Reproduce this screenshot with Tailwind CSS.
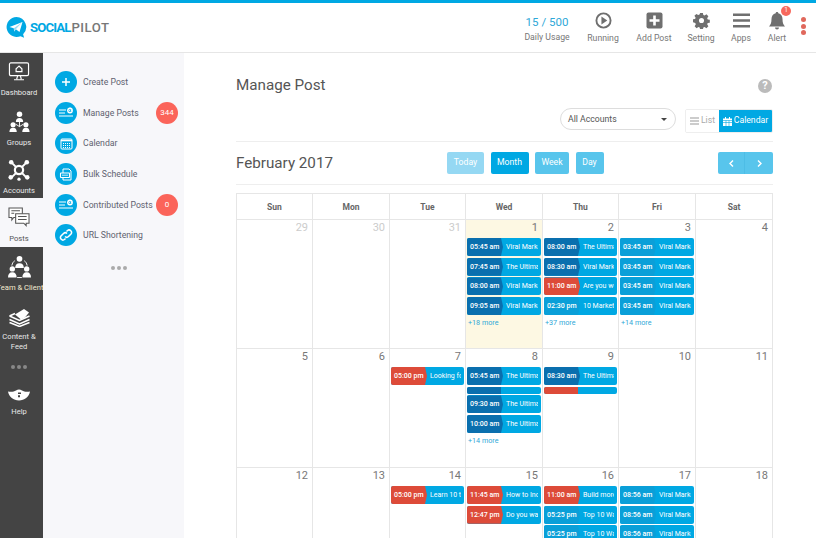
<!DOCTYPE html>
<html lang="en">
<head>
  <meta charset="UTF-8">
  <title>SocialPilot - Manage Post</title>
  <script src="https://cdn.jsdelivr.net/npm/@tailwindcss/browser@4"></script>
</head>
<body class="h-[538px] w-[816px] overflow-hidden bg-white font-['Roboto',sans-serif] text-[#777]">

  <!-- top bar -->
  <header class="flex h-[53px] items-center border-t-[3px] border-b border-t-[#00a8e3] border-b-[#e6e6e6] bg-white">
    <div class="flex w-[519px] items-center pl-[6px]">
      <svg class="h-[21px] w-[21px]" viewBox="0 0 21 21"><path fill="#00a8e3" d="M10.5 0a10 10 0 1 0 4 19.2l3.6 1.5-1-3.5A10 10 0 0 0 10.5 0z"/><path fill="#fff" d="M3.5 10 16.5 5l-3 10-3.7-2.7-1.6 2.2-.4-3.3z"/><path fill="#9fdcf3" d="m7.8 11.200 8.700-6.200-6.700 7.300-1.600 2.200z"/></svg>
      <span class="ml-[3px] text-[13.200px] font-bold tracking-[-0.9px] text-[#00a8e3]">SOCIAL</span><span class="ml-[1px] text-[13.200px] font-medium tracking-[0.5px] text-[#777]">PILOT</span>
    </div>
    <div class="flex w-[56px] flex-col items-center">
      <span class="mt-[1px] h-[18px] text-[11.500px] leading-[19px] whitespace-nowrap text-[#2fa8d8]">15 / 500</span>
      <span class="text-[8.700px] leading-[12px] whitespace-nowrap">Daily Usage</span>
    </div>
    <div class="flex w-[56px] flex-col items-center">
      <svg class="h-[17px] w-[17px]" viewBox="0 0 18 18"><circle cx="9" cy="9" r="7.500" fill="none" stroke="#6f6f6f" stroke-width="2"/><path fill="#6f6f6f" d="M6.800 4.800 13 9l-6.200 4.200z"/></svg>
      <span class="mt-[3px] text-[8.700px] leading-[12px]">Running</span>
    </div>
    <div class="flex w-[46px] flex-col items-center">
      <svg class="h-[17px] w-[17px]" viewBox="0 0 17 17"><rect x=".5" y=".5" width="16" height="16" rx="2" fill="#6f6f6f"/><path stroke="#fff" stroke-width="2.600" d="M8.500 3.500v10M3.500 8.500h10"/></svg>
      <span class="mt-[3px] text-[8.700px] leading-[12px] whitespace-nowrap">Add Post</span>
    </div>
    <div class="flex w-[48px] flex-col items-center">
      <svg class="h-[17px] w-[17px]" viewBox="0 0 18 18"><path fill="#6f6f6f" fill-rule="evenodd" d="M7.500 1h3l.4 2.200 1.400.6 1.900-1.300 2.100 2.100-1.300 1.900.6 1.400 2.200.4v3l-2.200.4-.6 1.400 1.300 1.900-2.100 2.100-1.900-1.300-1.400.6-.4 2.200h-3l-.4-2.200-1.400-.6-1.900 1.300-2.100-2.100 1.300-1.900-.6-1.400L0 10.800v-3l2.200-.4.6-1.400-1.300-1.900 2.100-2.100 1.900 1.300 1.400-.6zM9 6.300a2.700 2.700 0 1 0 0 5.400 2.700 2.700 0 0 0 0-5.400z"/></svg>
      <span class="mt-[3px] text-[8.700px] leading-[12px]">Setting</span>
    </div>
    <div class="flex w-[32px] flex-col items-center">
      <svg class="h-[17px] w-[17px]" viewBox="0 0 18 18"><path stroke="#6f6f6f" stroke-width="2.600" d="M0 3h18M0 9h18M0 15h18"/></svg>
      <span class="mt-[3px] text-[8.700px] leading-[12px]">Apps</span>
    </div>
    <div class="relative flex w-[40px] flex-col items-center">
      <svg class="h-[18px] w-[18px]" viewBox="0 0 18 18"><path fill="#6f6f6f" d="M9 0c.8 0 1.300.5 1.300 1.200C13 1.800 14.500 4 14.500 7c0 3.800.8 5.700 2.500 7.500H1C2.700 12.700 3.500 10.800 3.500 7c0-3 1.500-5.200 4.200-5.800C7.700.5 8.200 0 9 0zM7 15.500h4a2 2 0 0 1-4 0z"/></svg>
      <span class="mt-[2px] text-[8.700px] leading-[12px]">Alert</span>
      <span class="absolute top-[-6px] left-[24px] flex h-[10px] w-[10px] items-center justify-center rounded-full bg-[#f7685c] text-[6.500px] text-white">1</span>
    </div>
    <div class="mb-[3px] ml-[4px] flex flex-col gap-[1.700px]">
      <span class="h-[5px] w-[5px] rounded-full bg-[#e0685c]"></span>
      <span class="h-[5px] w-[5px] rounded-full bg-[#e0685c]"></span>
      <span class="h-[5px] w-[5px] rounded-full bg-[#e0685c]"></span>
    </div>
  </header>

  <div class="flex h-[485px]">
    <!-- dark rail -->
    <nav class="w-[43px] shrink-0 bg-[#444] text-center text-[7.600px] leading-[10px] text-[#e8e8e8]">
      <div class="flex h-[48px] flex-col items-center overflow-hidden pt-[9px] pr-[5px] whitespace-nowrap">
        <svg class="h-[20px] w-[22px]" viewBox="0 0 24 22" fill="none" stroke="#fff"><rect x="1.500" y="1" width="21" height="14" rx="1.500" stroke-width="1.300"/><path stroke-width="1.300" d="M12 4.500 8.800 7.500v3h6.400v-3zM9.500 18.800l1-3.800M14.500 18.800l-1-3.800M6.500 19.500h11"/></svg>
        <span class="mt-[6px]">Dashboard</span>
      </div>
      <div class="flex h-[49px] flex-col items-center pt-[10px] pr-[5px]">
        <svg class="h-[22px] w-[21px]" viewBox="0 0 22 24" fill="#fff"><circle cx="11" cy="3.500" r="3"/><path d="M7 12c0-3 1.500-4.500 4-4.500s4 1.500 4 4.500z"/><circle cx="4" cy="15" r="2.800"/><path d="M0 23c0-3 1.500-4.700 4-4.700S8 20 8 23z"/><circle cx="18" cy="15" r="2.800"/><path d="M14 23c0-3 1.500-4.700 4-4.700s4 1.700 4 4.700z"/><path fill="none" stroke="#fff" d="M11 12v5M11 17l-4-2.500M11 17l4-2.500"/></svg>
        <span class="mt-[5px]">Groups</span>
      </div>
      <div class="flex h-[48px] flex-col items-center pt-[9px] pr-[5px]">
        <svg class="h-[22px] w-[22px]" viewBox="0 0 24 24" fill="#fff"><circle cx="12" cy="12" r="4.500" fill="none" stroke="#fff" stroke-width="2.400"/><circle cx="3.500" cy="3.500" r="2.500"/><circle cx="20.500" cy="3.500" r="2.500"/><circle cx="3" cy="20" r="2.500"/><circle cx="21" cy="20" r="2.500"/><circle cx="12" cy="22" r="1.800"/><path stroke="#fff" stroke-width="2" d="m4 4 5 5M20 4l-5 5M4 20l5-5M20 20l-5-5"/></svg>
        <span class="mt-[5px]">Accounts</span>
      </div>
      <div class="flex h-[49px] flex-col items-center bg-[#f7f7fa] pt-[9px] pr-[5px] text-[#555]">
        <svg class="h-[21px] w-[22px]" viewBox="0 0 23 22" fill="#fff" stroke="#555" stroke-width="1.100"><path d="M1 1h14v10H6l-2 2.500V11H1z"/><path d="M8 7h14v10h-3v2.500L16.500 17H8z"/><path fill="none" d="M3.500 4h9M3.500 6.500h3M10.500 10h9M10.500 13h9"/></svg>
        <span class="mt-[6px]">Posts</span>
      </div>
      <div class="flex h-[49px] flex-col items-center overflow-hidden pt-[8px] pr-[3px] whitespace-nowrap">
        <svg class="mr-[2px] h-[24px] w-[23px]" viewBox="0 0 24 24" fill="#fff"><circle cx="12" cy="3.500" r="3"/><path d="M7.500 13c0-3.500 1.500-5 4.500-5s4.500 1.500 4.500 5z"/><circle cx="4.500" cy="14" r="2.800"/><path d="M0 23c0-3.500 1.500-5.500 4.500-5.500S9 19.500 9 23z"/><circle cx="19.500" cy="14" r="2.800"/><path d="M15 23c0-3.500 1.500-5.500 4.500-5.500S24 19.500 24 23z"/><path fill="none" stroke="#fff" d="M4 10.500C4.500 8 5.500 6.500 7 5.500M20 10.500c-.5-2.500-1.500-4-3-5M9.500 23h5"/></svg>
        <span class="mt-[4px] text-[#f3ead0]">Team &amp; Client</span>
      </div>
      <div class="flex h-[59px] flex-col items-center pt-[12px] pr-[5px]">
        <svg class="h-[19px] w-[23px]" viewBox="0 0 23 19" fill="none" stroke="#fff" stroke-width="1.500"><path fill="#fff" stroke="none" d="M7 6.500 16 1l5 3.500-4 5-4 2z"/><path d="m1.500 8 10 4.500 10-4.500M1.500 11.500l10 4.500 10-4.500M1.500 14.500l10 4 10-4M1.500 8 7 5.500"/></svg>
        <span class="mt-[5px]">Content &amp; Feed</span>
      </div>
      <div class="flex h-[33px] justify-center gap-[2px] pt-[10px] pr-[5px]">
        <span class="h-[4px] w-[4px] rounded-full bg-[#888]"></span>
        <span class="h-[4px] w-[4px] rounded-full bg-[#888]"></span>
        <span class="h-[4px] w-[4px] rounded-full bg-[#888]"></span>
      </div>
      <div class="flex flex-col items-center pt-[1px] pr-[5px]">
        <svg class="h-[12px] w-[22px]" viewBox="0 0 22 12"><path fill="#fff" d="M0 2.500C3 3 6 2.800 8 1.500c1-.6 2-1 3-1s2 .4 3 1c2 1.300 5 1.500 8 1-1 5.500-5.500 9-11 9S1 8 0 2.500z"/><path fill="#444" d="M10 3.500h3v1.500h-3zM10 6.200h2v2h-2z"/></svg>
        <span class="mt-[6px]">Help</span>
      </div>
    </nav>

    <!-- section menu -->
    <aside class="w-[141px] shrink-0 bg-[#f7f7fa] pt-[18px] text-[8.700px] leading-[13px] text-[#5f6270]">
      <div class="flex h-[30.700px] items-start pl-[12px]">
        <span class="flex h-[22px] w-[22px] shrink-0 items-center justify-center rounded-full bg-[#00a8e3]">
          <svg class="h-[10px] w-[10px]" viewBox="0 0 10 10"><path stroke="#fff" stroke-width="1.500" d="M5 1v8M1 5h8"/></svg>
        </span>
        <span class="mt-[5px] ml-[6px]">Create Post</span>
      </div>
      <div class="flex h-[30.700px] items-start pr-[6px] pl-[12px]">
        <span class="flex h-[22px] w-[22px] shrink-0 items-center justify-center rounded-full bg-[#00a8e3]">
          <svg class="h-[14px] w-[16px]" viewBox="0 0 16 14" fill="none" stroke="#fff"><path stroke-width="1.200" d="M1 4h7M1 7h6M1 10h14"/><circle cx="12" cy="4.500" r="2.200" stroke-width="1.400"/><path stroke-width=".8" stroke-dasharray="1 1" d="M9 4.500h6M12 1.500v6"/></svg>
        </span>
        <span class="mt-[5px] ml-[6px]">Manage Posts</span>
        <span class="ml-auto flex h-[22px] w-[22px] shrink-0 items-center justify-center rounded-full bg-[#fb645a] text-[8px] text-white">344</span>
      </div>
      <div class="flex h-[30.700px] items-start pl-[12px]">
        <span class="flex h-[22px] w-[22px] shrink-0 items-center justify-center rounded-full bg-[#00a8e3]">
          <svg class="h-[13px] w-[13px]" viewBox="0 0 13 13" fill="none" stroke="#fff"><rect x="1" y="2" width="11" height="10" rx="1"/><path stroke-width="1.600" d="M1 3.500h11"/><path stroke-dasharray="1 1" d="M3 6.500h7M3 8.500h7M3 10.500h7"/></svg>
        </span>
        <span class="mt-[5px] ml-[6px]">Calendar</span>
      </div>
      <div class="flex h-[30.700px] items-start pl-[12px]">
        <span class="flex h-[22px] w-[22px] shrink-0 items-center justify-center rounded-full bg-[#00a8e3]">
          <svg class="h-[13px] w-[14px]" viewBox="0 0 14 13" fill="none" stroke="#fff"><path d="M4 1h6l2 2v9H4z"/><rect x="1.500" y="5" width="9" height="4.500" rx=".5" fill="#00a8e3" stroke-width="1.100"/><path stroke-width=".8" d="M3 7.200h6"/></svg>
        </span>
        <span class="mt-[5px] ml-[6px]">Bulk Schedule</span>
      </div>
      <div class="flex h-[30.700px] items-start pr-[6px] pl-[12px]">
        <span class="flex h-[22px] w-[22px] shrink-0 items-center justify-center rounded-full bg-[#00a8e3]">
          <svg class="h-[14px] w-[16px]" viewBox="0 0 16 14" fill="none" stroke="#fff"><path stroke-width="1.200" d="M1 4h7M1 7h6M1 10h14"/><circle cx="12" cy="4.500" r="2.200" stroke-width="1.400"/><path stroke-width=".8" stroke-dasharray="1 1" d="M9 4.500h6M12 1.500v6"/></svg>
        </span>
        <span class="mt-[5px] ml-[6px] whitespace-nowrap">Contributed Posts</span>
        <span class="ml-auto flex h-[22px] w-[22px] shrink-0 items-center justify-center rounded-full bg-[#fb645a] text-[8px] text-white">0</span>
      </div>
      <div class="flex h-[30.700px] items-start pl-[12px]">
        <span class="flex h-[22px] w-[22px] shrink-0 items-center justify-center rounded-full bg-[#00a8e3]">
          <svg class="h-[14px] w-[14px]" viewBox="0 0 14 14" fill="none" stroke="#fff" stroke-width="1.500"><path d="M6 8.500a2.500 2.500 0 0 0 3.500 0l2.500-2.500A2.500 2.500 0 0 0 8.500 2.500L7.500 3.500"/><path d="M8 5.500a2.500 2.500 0 0 0-3.500 0L2 8a2.500 2.500 0 0 0 3.500 3.500l1-1"/></svg>
        </span>
        <span class="mt-[5px] ml-[6px]">URL Shortening</span>
      </div>
      <div class="mt-[11px] flex justify-center gap-[2px] pl-[10px]">
        <span class="h-[4px] w-[4px] rounded-full bg-[#aaa]"></span>
        <span class="h-[4px] w-[4px] rounded-full bg-[#aaa]"></span>
        <span class="h-[4px] w-[4px] rounded-full bg-[#aaa]"></span>
      </div>
    </aside>

    <!-- main -->
    <main class="w-[632px] shrink-0 pr-[43px] pl-[52px]">
      <div class="flex h-[55px] items-end justify-between pb-[13px]">
        <h1 class="text-[15.200px] leading-[20px] text-[#555]">Manage Post</h1>
        <span class="mr-[1px] mb-[2px] flex h-[14px] w-[14px] items-center justify-center rounded-full bg-[#bbb] text-[11px] font-bold text-white">?</span>
      </div>
      <div class="flex h-[34px] items-start justify-end border-b border-[#eee]">
        <div class="flex h-[22px] w-[116px] items-center justify-between rounded-full border border-[#ddd] pt-[1px] pr-[8px] pl-[7px] text-[8.700px] text-[#555]">
          All Accounts
          <span class="h-0 w-0 border-x-[3px] border-t-[3px] border-x-transparent border-t-[#444]"></span>
        </div>
        <div class="mt-[1px] ml-[9px] flex h-[24px] overflow-hidden rounded-[2px] border border-[#eee] text-[8.700px]">
          <span class="flex w-[33px] items-center justify-center gap-[2px] bg-white text-[#aaa]">
            <svg class="h-[8px] w-[9px]" viewBox="0 0 9 8"><path stroke="#999" stroke-width="1.200" d="M0 1h9M0 4h9M0 7h9"/></svg>List
          </span>
          <span class="flex w-[53px] items-center justify-center gap-[2px] bg-[#00a8e3] text-white">
            <svg class="h-[9px] w-[9px]" viewBox="0 0 9 9"><path fill="#fff" d="M0 1.500h9V9H0zM2 0h1v2H2zM6 0h1v2H6z"/><path stroke="#00a8e3" stroke-width=".6" d="M0 3.500h9M0 5.500h9M3 3.500V9M6 3.500V9"/></svg>Calendar
          </span>
        </div>
      </div>
      <div class="flex h-[43px] items-center border-b border-[#eee]">
        <h2 class="w-[211px] text-[15.200px] text-[#555]">February 2017</h2>
        <div class="flex gap-[6.500px] text-[8.700px] text-white">
          <span class="flex h-[22px] w-[37px] items-center justify-center rounded-[2px] bg-[#95d8f3]">Today</span>
          <span class="flex h-[22px] w-[38px] items-center justify-center rounded-[2px] bg-[#00a8e3]">Month</span>
          <span class="flex h-[22px] w-[34px] items-center justify-center rounded-[2px] bg-[#58c5ec]">Week</span>
          <span class="flex h-[22px] w-[28px] items-center justify-center rounded-[2px] bg-[#58c5ec]">Day</span>
        </div>
        <div class="ml-auto flex h-[22px] w-[55px] overflow-hidden rounded-[2px] bg-[#58c5ec]">
          <span class="flex w-[27px] items-center justify-center border-r border-[#4dbde6]">
            <svg class="h-[7px] w-[5px]" viewBox="0 0 5 7" fill="none"><path stroke="#fff" stroke-width="1.400" d="M4 .5 1 3.500l3 3"/></svg>
          </span>
          <span class="flex w-[28px] items-center justify-center">
            <svg class="h-[7px] w-[5px]" viewBox="0 0 5 7" fill="none"><path stroke="#fff" stroke-width="1.400" d="m1 .5 3 3-3 3"/></svg>
          </span>
        </div>
      </div>

      <!-- calendar -->
      <div class="mt-[8px] grid h-[400px] grid-cols-[76px_77px_76px_77px_76px_77px_77px] grid-rows-[26px_129px_119px_126px] border-t border-l border-[#e6e6e6] text-[11px] leading-[16px] text-[#777]">
        <div class="flex items-center justify-center border-r border-b border-[#e6e6e6] text-[8.500px] font-bold text-[#666]">Sun</div>
        <div class="flex items-center justify-center border-r border-b border-[#e6e6e6] text-[8.500px] font-bold text-[#666]">Mon</div>
        <div class="flex items-center justify-center border-r border-b border-[#e6e6e6] text-[8.500px] font-bold text-[#666]">Tue</div>
        <div class="flex items-center justify-center border-r border-b border-[#e6e6e6] text-[8.500px] font-bold text-[#666]">Wed</div>
        <div class="flex items-center justify-center border-r border-b border-[#e6e6e6] text-[8.500px] font-bold text-[#666]">Thu</div>
        <div class="flex items-center justify-center border-r border-b border-[#e6e6e6] text-[8.500px] font-bold text-[#666]">Fri</div>
        <div class="flex items-center justify-center border-r border-b border-[#e6e6e6] text-[8.500px] font-bold text-[#666]">Sat</div>

        <!-- row 1 -->
        <div class="border-r border-b border-[#e6e6e6] pr-[4px] text-right text-[#ccc]">29</div>
        <div class="border-r border-b border-[#e6e6e6] pr-[4px] text-right text-[#ccc]">30</div>
        <div class="border-r border-b border-[#e6e6e6] pr-[4px] text-right text-[#ccc]">31</div>
        <div class="border-r border-b border-[#e6e6e6] bg-[#fdf8e3]">
          <div class="pr-[4px] text-right">1</div>
          <div class="mt-[2px] flex flex-col gap-[1.700px] px-[1px] text-[7px] leading-[18px] font-medium text-white">
            <div class="relative h-[18px] overflow-hidden rounded-[2px] bg-[#00a8e3]"><span class="absolute inset-y-0 left-0 w-[36px] bg-[#0a6fae] pl-[3px] whitespace-nowrap [clip-path:polygon(0_0,34px_0,36px_50%,34px_100%,0_100%)]">05:45 am</span><span class="absolute inset-y-0 right-[3px] left-[39px] overflow-hidden font-normal whitespace-nowrap">Viral Marketing</span></div>
            <div class="relative h-[18px] overflow-hidden rounded-[2px] bg-[#00a8e3]"><span class="absolute inset-y-0 left-0 w-[36px] bg-[#0a6fae] pl-[3px] whitespace-nowrap [clip-path:polygon(0_0,34px_0,36px_50%,34px_100%,0_100%)]">07:45 am</span><span class="absolute inset-y-0 right-[3px] left-[39px] overflow-hidden font-normal whitespace-nowrap">The Ultimate</span></div>
            <div class="relative h-[18px] overflow-hidden rounded-[2px] bg-[#00a8e3]"><span class="absolute inset-y-0 left-0 w-[36px] bg-[#0a6fae] pl-[3px] whitespace-nowrap [clip-path:polygon(0_0,34px_0,36px_50%,34px_100%,0_100%)]">08:00 am</span><span class="absolute inset-y-0 right-[3px] left-[39px] overflow-hidden font-normal whitespace-nowrap">Viral Marketing</span></div>
            <div class="relative h-[18px] overflow-hidden rounded-[2px] bg-[#00a8e3]"><span class="absolute inset-y-0 left-0 w-[36px] bg-[#0a6fae] pl-[3px] whitespace-nowrap [clip-path:polygon(0_0,34px_0,36px_50%,34px_100%,0_100%)]">09:05 am</span><span class="absolute inset-y-0 right-[3px] left-[39px] overflow-hidden font-normal whitespace-nowrap">Viral Marketing</span></div>
            <span class="pl-[1px] text-[7.200px] leading-[12px] font-normal text-[#2fa8d8]">+18 more</span>
          </div>
        </div>
        <div class="border-r border-b border-[#e6e6e6]">
          <div class="pr-[4px] text-right">2</div>
          <div class="mt-[2px] flex flex-col gap-[1.700px] px-[1px] text-[7px] leading-[18px] font-medium text-white">
            <div class="relative h-[18px] overflow-hidden rounded-[2px] bg-[#00a8e3]"><span class="absolute inset-y-0 left-0 w-[36px] bg-[#0a6fae] pl-[3px] whitespace-nowrap [clip-path:polygon(0_0,34px_0,36px_50%,34px_100%,0_100%)]">08:00 am</span><span class="absolute inset-y-0 right-[3px] left-[39px] overflow-hidden font-normal whitespace-nowrap">The Ultimate</span></div>
            <div class="relative h-[18px] overflow-hidden rounded-[2px] bg-[#00a8e3]"><span class="absolute inset-y-0 left-0 w-[36px] bg-[#0a6fae] pl-[3px] whitespace-nowrap [clip-path:polygon(0_0,34px_0,36px_50%,34px_100%,0_100%)]">08:30 am</span><span class="absolute inset-y-0 right-[3px] left-[39px] overflow-hidden font-normal whitespace-nowrap">Viral Marketing</span></div>
            <div class="relative h-[18px] overflow-hidden rounded-[2px] bg-[#00a8e3]"><span class="absolute inset-y-0 left-0 w-[36px] bg-[#dd4b39] pl-[3px] whitespace-nowrap [clip-path:polygon(0_0,34px_0,36px_50%,34px_100%,0_100%)]">11:00 am</span><span class="absolute inset-y-0 right-[3px] left-[39px] overflow-hidden font-normal whitespace-nowrap">Are you worried</span></div>
            <div class="relative h-[18px] overflow-hidden rounded-[2px] bg-[#00a8e3]"><span class="absolute inset-y-0 left-0 w-[36px] bg-[#0a9fd8] pl-[3px] whitespace-nowrap [clip-path:polygon(0_0,34px_0,36px_50%,34px_100%,0_100%)]">02:30 pm</span><span class="absolute inset-y-0 right-[3px] left-[39px] overflow-hidden font-normal whitespace-nowrap">10 Marketing</span></div>
            <span class="pl-[1px] text-[7.200px] leading-[12px] font-normal text-[#2fa8d8]">+37 more</span>
          </div>
        </div>
        <div class="border-r border-b border-[#e6e6e6]">
          <div class="pr-[4px] text-right">3</div>
          <div class="mt-[2px] flex flex-col gap-[1.700px] px-[1px] text-[7px] leading-[18px] font-medium text-white">
            <div class="relative h-[18px] overflow-hidden rounded-[2px] bg-[#00a8e3]"><span class="absolute inset-y-0 left-0 w-[36px] bg-[#0a9fd8] pl-[3px] whitespace-nowrap [clip-path:polygon(0_0,34px_0,36px_50%,34px_100%,0_100%)]">03:45 am</span><span class="absolute inset-y-0 right-[3px] left-[39px] overflow-hidden font-normal whitespace-nowrap">Viral Marketing</span></div>
            <div class="relative h-[18px] overflow-hidden rounded-[2px] bg-[#00a8e3]"><span class="absolute inset-y-0 left-0 w-[36px] bg-[#0a9fd8] pl-[3px] whitespace-nowrap [clip-path:polygon(0_0,34px_0,36px_50%,34px_100%,0_100%)]">03:45 am</span><span class="absolute inset-y-0 right-[3px] left-[39px] overflow-hidden font-normal whitespace-nowrap">Viral Marketing</span></div>
            <div class="relative h-[18px] overflow-hidden rounded-[2px] bg-[#00a8e3]"><span class="absolute inset-y-0 left-0 w-[36px] bg-[#0a9fd8] pl-[3px] whitespace-nowrap [clip-path:polygon(0_0,34px_0,36px_50%,34px_100%,0_100%)]">03:45 am</span><span class="absolute inset-y-0 right-[3px] left-[39px] overflow-hidden font-normal whitespace-nowrap">Viral Marketing</span></div>
            <div class="relative h-[18px] overflow-hidden rounded-[2px] bg-[#00a8e3]"><span class="absolute inset-y-0 left-0 w-[36px] bg-[#0a9fd8] pl-[3px] whitespace-nowrap [clip-path:polygon(0_0,34px_0,36px_50%,34px_100%,0_100%)]">03:45 am</span><span class="absolute inset-y-0 right-[3px] left-[39px] overflow-hidden font-normal whitespace-nowrap">Viral Marketing</span></div>
            <span class="pl-[1px] text-[7.200px] leading-[12px] font-normal text-[#2fa8d8]">+14 more</span>
          </div>
        </div>
        <div class="border-r border-b border-[#e6e6e6] pr-[4px] text-right">4</div>

        <!-- row 2 -->
        <div class="border-r border-b border-[#e6e6e6] pr-[4px] text-right">5</div>
        <div class="border-r border-b border-[#e6e6e6] pr-[4px] text-right">6</div>
        <div class="border-r border-b border-[#e6e6e6]">
          <div class="pr-[4px] text-right">7</div>
          <div class="mt-[2px] flex flex-col gap-[1.700px] px-[1px] text-[7px] leading-[18px] font-medium text-white">
            <div class="relative h-[18px] overflow-hidden rounded-[2px] bg-[#00a8e3]"><span class="absolute inset-y-0 left-0 w-[36px] bg-[#dd4b39] pl-[3px] whitespace-nowrap [clip-path:polygon(0_0,34px_0,36px_50%,34px_100%,0_100%)]">05:00 pm</span><span class="absolute inset-y-0 right-[3px] left-[39px] overflow-hidden font-normal whitespace-nowrap">Looking for</span></div>
          </div>
        </div>
        <div class="border-r border-b border-[#e6e6e6]">
          <div class="pr-[4px] text-right">8</div>
          <div class="mt-[2px] flex flex-col gap-[1.700px] px-[1px] text-[7px] leading-[18px] font-medium text-white">
            <div class="relative h-[18px] overflow-hidden rounded-[2px] bg-[#00a8e3]"><span class="absolute inset-y-0 left-0 w-[36px] bg-[#0a6fae] pl-[3px] whitespace-nowrap [clip-path:polygon(0_0,34px_0,36px_50%,34px_100%,0_100%)]">05:45 am</span><span class="absolute inset-y-0 right-[3px] left-[39px] overflow-hidden font-normal whitespace-nowrap">The Ultimate</span></div>
            <div class="relative h-[7px] overflow-hidden rounded-[2px] bg-[#00a8e3]"><span class="absolute inset-y-0 left-0 w-[34px] bg-[#0a6fae]"></span></div>
            <div class="relative h-[18px] overflow-hidden rounded-[2px] bg-[#00a8e3]"><span class="absolute inset-y-0 left-0 w-[36px] bg-[#0a6fae] pl-[3px] whitespace-nowrap [clip-path:polygon(0_0,34px_0,36px_50%,34px_100%,0_100%)]">09:30 am</span><span class="absolute inset-y-0 right-[3px] left-[39px] overflow-hidden font-normal whitespace-nowrap">The Ultimate</span></div>
            <div class="relative h-[18px] overflow-hidden rounded-[2px] bg-[#00a8e3]"><span class="absolute inset-y-0 left-0 w-[36px] bg-[#0a6fae] pl-[3px] whitespace-nowrap [clip-path:polygon(0_0,34px_0,36px_50%,34px_100%,0_100%)]">10:00 am</span><span class="absolute inset-y-0 right-[3px] left-[39px] overflow-hidden font-normal whitespace-nowrap">The Ultimate</span></div>
            <span class="pl-[1px] text-[7.200px] leading-[12px] font-normal text-[#2fa8d8]">+14 more</span>
          </div>
        </div>
        <div class="border-r border-b border-[#e6e6e6]">
          <div class="pr-[4px] text-right">9</div>
          <div class="mt-[2px] flex flex-col gap-[1.700px] px-[1px] text-[7px] leading-[18px] font-medium text-white">
            <div class="relative h-[18px] overflow-hidden rounded-[2px] bg-[#00a8e3]"><span class="absolute inset-y-0 left-0 w-[36px] bg-[#0a6fae] pl-[3px] whitespace-nowrap [clip-path:polygon(0_0,34px_0,36px_50%,34px_100%,0_100%)]">08:30 am</span><span class="absolute inset-y-0 right-[3px] left-[39px] overflow-hidden font-normal whitespace-nowrap">The Ultimate</span></div>
            <div class="relative h-[7px] overflow-hidden rounded-[2px] bg-[#00a8e3]"><span class="absolute inset-y-0 left-0 w-[34px] bg-[#dd4b39]"></span></div>
          </div>
        </div>
        <div class="border-r border-b border-[#e6e6e6] pr-[4px] text-right">10</div>
        <div class="border-r border-b border-[#e6e6e6] pr-[4px] text-right">11</div>

        <!-- row 3 -->
        <div class="border-r border-[#e6e6e6] pr-[4px] text-right">12</div>
        <div class="border-r border-[#e6e6e6] pr-[4px] text-right">13</div>
        <div class="border-r border-[#e6e6e6]">
          <div class="pr-[4px] text-right">14</div>
          <div class="mt-[2px] flex flex-col gap-[1.700px] px-[1px] text-[7px] leading-[18px] font-medium text-white">
            <div class="relative h-[18px] overflow-hidden rounded-[2px] bg-[#00a8e3]"><span class="absolute inset-y-0 left-0 w-[36px] bg-[#dd4b39] pl-[3px] whitespace-nowrap [clip-path:polygon(0_0,34px_0,36px_50%,34px_100%,0_100%)]">05:00 pm</span><span class="absolute inset-y-0 right-[3px] left-[39px] overflow-hidden font-normal whitespace-nowrap">Learn 10 tips</span></div>
          </div>
        </div>
        <div class="border-r border-[#e6e6e6]">
          <div class="pr-[4px] text-right">15</div>
          <div class="mt-[2px] flex flex-col gap-[1.700px] px-[1px] text-[7px] leading-[18px] font-medium text-white">
            <div class="relative h-[18px] overflow-hidden rounded-[2px] bg-[#00a8e3]"><span class="absolute inset-y-0 left-0 w-[36px] bg-[#dd4b39] pl-[3px] whitespace-nowrap [clip-path:polygon(0_0,34px_0,36px_50%,34px_100%,0_100%)]">11:45 am</span><span class="absolute inset-y-0 right-[3px] left-[39px] overflow-hidden font-normal whitespace-nowrap">How to Increase</span></div>
            <div class="relative h-[18px] overflow-hidden rounded-[2px] bg-[#00a8e3]"><span class="absolute inset-y-0 left-0 w-[36px] bg-[#dd4b39] pl-[3px] whitespace-nowrap [clip-path:polygon(0_0,34px_0,36px_50%,34px_100%,0_100%)]">12:47 pm</span><span class="absolute inset-y-0 right-[3px] left-[39px] overflow-hidden font-normal whitespace-nowrap">Do you want</span></div>
          </div>
        </div>
        <div class="border-r border-[#e6e6e6]">
          <div class="pr-[4px] text-right">16</div>
          <div class="mt-[2px] flex flex-col gap-[1.700px] px-[1px] text-[7px] leading-[18px] font-medium text-white">
            <div class="relative h-[18px] overflow-hidden rounded-[2px] bg-[#00a8e3]"><span class="absolute inset-y-0 left-0 w-[36px] bg-[#dd4b39] pl-[3px] whitespace-nowrap [clip-path:polygon(0_0,34px_0,36px_50%,34px_100%,0_100%)]">11:00 am</span><span class="absolute inset-y-0 right-[3px] left-[39px] overflow-hidden font-normal whitespace-nowrap">Build more</span></div>
            <div class="relative h-[18px] overflow-hidden rounded-[2px] bg-[#00a8e3]"><span class="absolute inset-y-0 left-0 w-[36px] bg-[#0a9fd8] pl-[3px] whitespace-nowrap [clip-path:polygon(0_0,34px_0,36px_50%,34px_100%,0_100%)]">05:25 pm</span><span class="absolute inset-y-0 right-[3px] left-[39px] overflow-hidden font-normal whitespace-nowrap">Top 10 Ways</span></div>
            <div class="relative h-[18px] overflow-hidden rounded-[2px] bg-[#00a8e3]"><span class="absolute inset-y-0 left-0 w-[36px] bg-[#0a9fd8] pl-[3px] whitespace-nowrap [clip-path:polygon(0_0,34px_0,36px_50%,34px_100%,0_100%)]">05:25 pm</span><span class="absolute inset-y-0 right-[3px] left-[39px] overflow-hidden font-normal whitespace-nowrap">Top 10 Ways</span></div>
          </div>
        </div>
        <div class="border-r border-[#e6e6e6]">
          <div class="pr-[4px] text-right">17</div>
          <div class="mt-[2px] flex flex-col gap-[1.700px] px-[1px] text-[7px] leading-[18px] font-medium text-white">
            <div class="relative h-[18px] overflow-hidden rounded-[2px] bg-[#00a8e3]"><span class="absolute inset-y-0 left-0 w-[36px] bg-[#0a9fd8] pl-[3px] whitespace-nowrap [clip-path:polygon(0_0,34px_0,36px_50%,34px_100%,0_100%)]">08:56 am</span><span class="absolute inset-y-0 right-[3px] left-[39px] overflow-hidden font-normal whitespace-nowrap">Viral Marketing</span></div>
            <div class="relative h-[18px] overflow-hidden rounded-[2px] bg-[#00a8e3]"><span class="absolute inset-y-0 left-0 w-[36px] bg-[#0a9fd8] pl-[3px] whitespace-nowrap [clip-path:polygon(0_0,34px_0,36px_50%,34px_100%,0_100%)]">08:56 am</span><span class="absolute inset-y-0 right-[3px] left-[39px] overflow-hidden font-normal whitespace-nowrap">Viral Marketing</span></div>
            <div class="relative h-[18px] overflow-hidden rounded-[2px] bg-[#00a8e3]"><span class="absolute inset-y-0 left-0 w-[36px] bg-[#0a9fd8] pl-[3px] whitespace-nowrap [clip-path:polygon(0_0,34px_0,36px_50%,34px_100%,0_100%)]">08:56 am</span><span class="absolute inset-y-0 right-[3px] left-[39px] overflow-hidden font-normal whitespace-nowrap">Viral Marketing</span></div>
          </div>
        </div>
        <div class="border-r border-[#e6e6e6] pr-[4px] text-right">18</div>
      </div>
    </main>
  </div>
</body>
</html>
